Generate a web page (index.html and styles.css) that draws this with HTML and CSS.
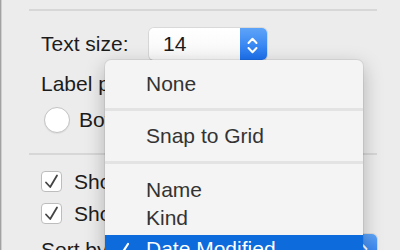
FILE: index.html
```html
<!DOCTYPE html>
<html>
<head>
    <meta charset="UTF-8" />
    <title>View Options</title>
    <link rel="stylesheet" href="styles.css">
</head>
<body>
    <div class="panel">
        <div class="sep"></div>

        <div class="row text-size">
            <span class="field-label">Text size:</span>
            <div class="popup">
                <span class="popup-value">14</span>
                <span class="popup-arrows">
                    <svg width="27" height="32" viewBox="0 0 27 32">
                        <path d="M8.5 15 L12.5 10.8 L16.5 15" />
                        <path d="M8.5 20 L12.5 24.2 L16.5 20" />
                    </svg>
                </span>
            </div>
        </div>

        <div class="row label-row">
            <span class="field-label">Label position:</span>
        </div>

        <div class="row radio-row">
            <span class="radio"></span>
            <span class="option-text">Bottom</span>
            <span class="radio"></span>
            <span class="option-text">Right</span>
        </div>

        <div class="sep sep-mid"></div>

        <div class="row check-row first">
            <span class="checkbox">
                <svg width="21" height="21" viewBox="0 0 21 21">
                    <path d="M5 11.5 L9.2 16 L16 4.5" />
                </svg>
            </span>
            <span class="check-text">Show item info</span>
        </div>

        <div class="row check-row">
            <span class="checkbox">
                <svg width="21" height="21" viewBox="0 0 21 21">
                    <path d="M5 11.5 L9.2 16 L16 4.5" />
                </svg>
            </span>
            <span class="check-text">Show icon preview</span>
        </div>

        <div class="row sort-row">
            <span class="field-label">Sort by:</span>
            <div class="popup wide">
                <span class="popup-value">Date Modified</span>
                <span class="popup-arrows">
                    <svg width="27" height="32" viewBox="0 0 27 32">
                        <path d="M8.5 15 L12.5 10.8 L16.5 15" />
                        <path d="M8.5 20 L12.5 24.2 L16.5 20" />
                    </svg>
                </span>
            </div>
        </div>
    </div>

    <!-- popup menu for sort order, open over the panel -->
    <div class="menu">
        <div class="menu-item">None</div>
        <div class="menu-sep"></div>
        <div class="menu-item">Snap to Grid</div>
        <div class="menu-sep"></div>
        <div class="menu-item">Name</div>
        <div class="menu-item kind">Kind</div>
        <div class="menu-item selected">
            <svg class="tick" width="20" height="20" viewBox="0 0 20 20">
                <path d="M3 12 L7.5 17 L16 4" />
            </svg>
            Date Modified
        </div>
        <div class="menu-item">Date Created</div>
    </div>
</body>
</html>
```

FILE: styles.css
```css
:root {
    --bg: #ececec;
    --text: #1c1c1c;
    --menu-text: #333333;
    --blue-top: #5ea4f8;
    --blue-bottom: #1b70ee;
    --highlight: #0d6bdb;
}

body {
    margin: 0;
    width: 400px;
    height: 250px;
    overflow: hidden;
    background: var(--bg);
    font-family: 'Liberation Sans', Arial, sans-serif;
    font-size: 21px;
    color: var(--text);
    position: relative;
}

.panel {
    height: 250px;
    box-sizing: border-box;
    padding: 9px 23px 0 28px;
    border-left: 1px solid #a2a2a2;
    box-shadow: inset 1px 0 0 #cfcfcf;
}

.sep {
    height: 2px;
    background: #d7d7d7;
}

.row {
    display: flex;
    align-items: center;
    padding-left: 12px;
}

.field-label {
    width: 108px;
    line-height: 28px;
    white-space: nowrap;
}

.text-size {
    margin-top: 17px;
    height: 32px;
}

.popup {
    display: flex;
    height: 32px;
    width: 118px;
    border-radius: 5px;
    background: linear-gradient(#ffffff, #f7f7f7);
    box-shadow: 0 0 0 1px rgba(0, 0, 0, 0.08), 0 1px 1px rgba(0, 0, 0, 0.12);
    overflow: hidden;
}

.popup.wide {
    width: 228px;
}

.popup-value {
    flex: 1;
    padding-left: 14px;
    line-height: 32px;
    white-space: nowrap;
}

.popup-arrows {
    width: 27px;
    height: 32px;
    background: linear-gradient(var(--blue-top), var(--blue-bottom));
}

.popup-arrows svg path {
    fill: none;
    stroke: #ffffff;
    stroke-width: 2;
    stroke-linecap: round;
    stroke-linejoin: round;
}

.label-row {
    margin-top: 10px;
}

.radio-row {
    margin-top: 9px;
    height: 26px;
    padding-left: 15px;
}

.radio {
    width: 24px;
    height: 24px;
    border-radius: 50%;
    background: #ffffff;
    border: 1px solid #c3c3c3;
    box-shadow: 0 1px 1px rgba(0, 0, 0, 0.06);
    flex-shrink: 0;
}

.option-text {
    margin: 0 40px 0 9px;
    line-height: 26px;
}

.sep-mid {
    margin-top: 20px;
}

.check-row {
    height: 21px;
    margin-top: 11px;
}

.check-row.first {
    margin-top: 16px;
}

.checkbox {
    width: 19px;
    height: 19px;
    border: 1px solid #bdbdbd;
    border-radius: 4px;
    background: #ffffff;
    position: relative;
    flex-shrink: 0;
}

.checkbox svg {
    position: absolute;
    left: -1px;
    top: -1px;
}

.checkbox path {
    fill: none;
    stroke: #444444;
    stroke-width: 1.8;
    stroke-linecap: round;
    stroke-linejoin: round;
}

.check-text {
    margin-left: 12px;
    line-height: 21px;
    white-space: nowrap;
}

.sort-row {
    margin-top: 10px;
    height: 32px;
}

/* open menu */
.menu {
    position: absolute;
    left: 105px;
    top: 60px;
    width: 258px;
    height: 230px;
    padding-top: 10px;
    box-sizing: border-box;
    background: #f4f4f4;
    border-radius: 6px;
    box-shadow: 0 0 0 1px rgba(0, 0, 0, 0.06), 0 6px 20px rgba(0, 0, 0, 0.26);
    color: var(--menu-text);
}

.menu-item {
    position: relative;
    height: 28px;
    line-height: 28px;
    padding-left: 41px;
    white-space: nowrap;
}

.menu-item.kind {
    margin-bottom: 3px;
}

.menu-item.selected {
    background: var(--highlight);
    color: #ffffff;
}

.tick {
    position: absolute;
    left: 7px;
    top: 5px;
}

.tick path {
    fill: none;
    stroke: #ffffff;
    stroke-width: 2.2;
    stroke-linecap: round;
    stroke-linejoin: round;
}

.menu-sep {
    height: 3px;
    margin: 10px 0 11px;
    background: #e3e3e3;
}

.menu-sep + .menu-item + .menu-sep {
    margin: 11px 0 12px;
}
```
